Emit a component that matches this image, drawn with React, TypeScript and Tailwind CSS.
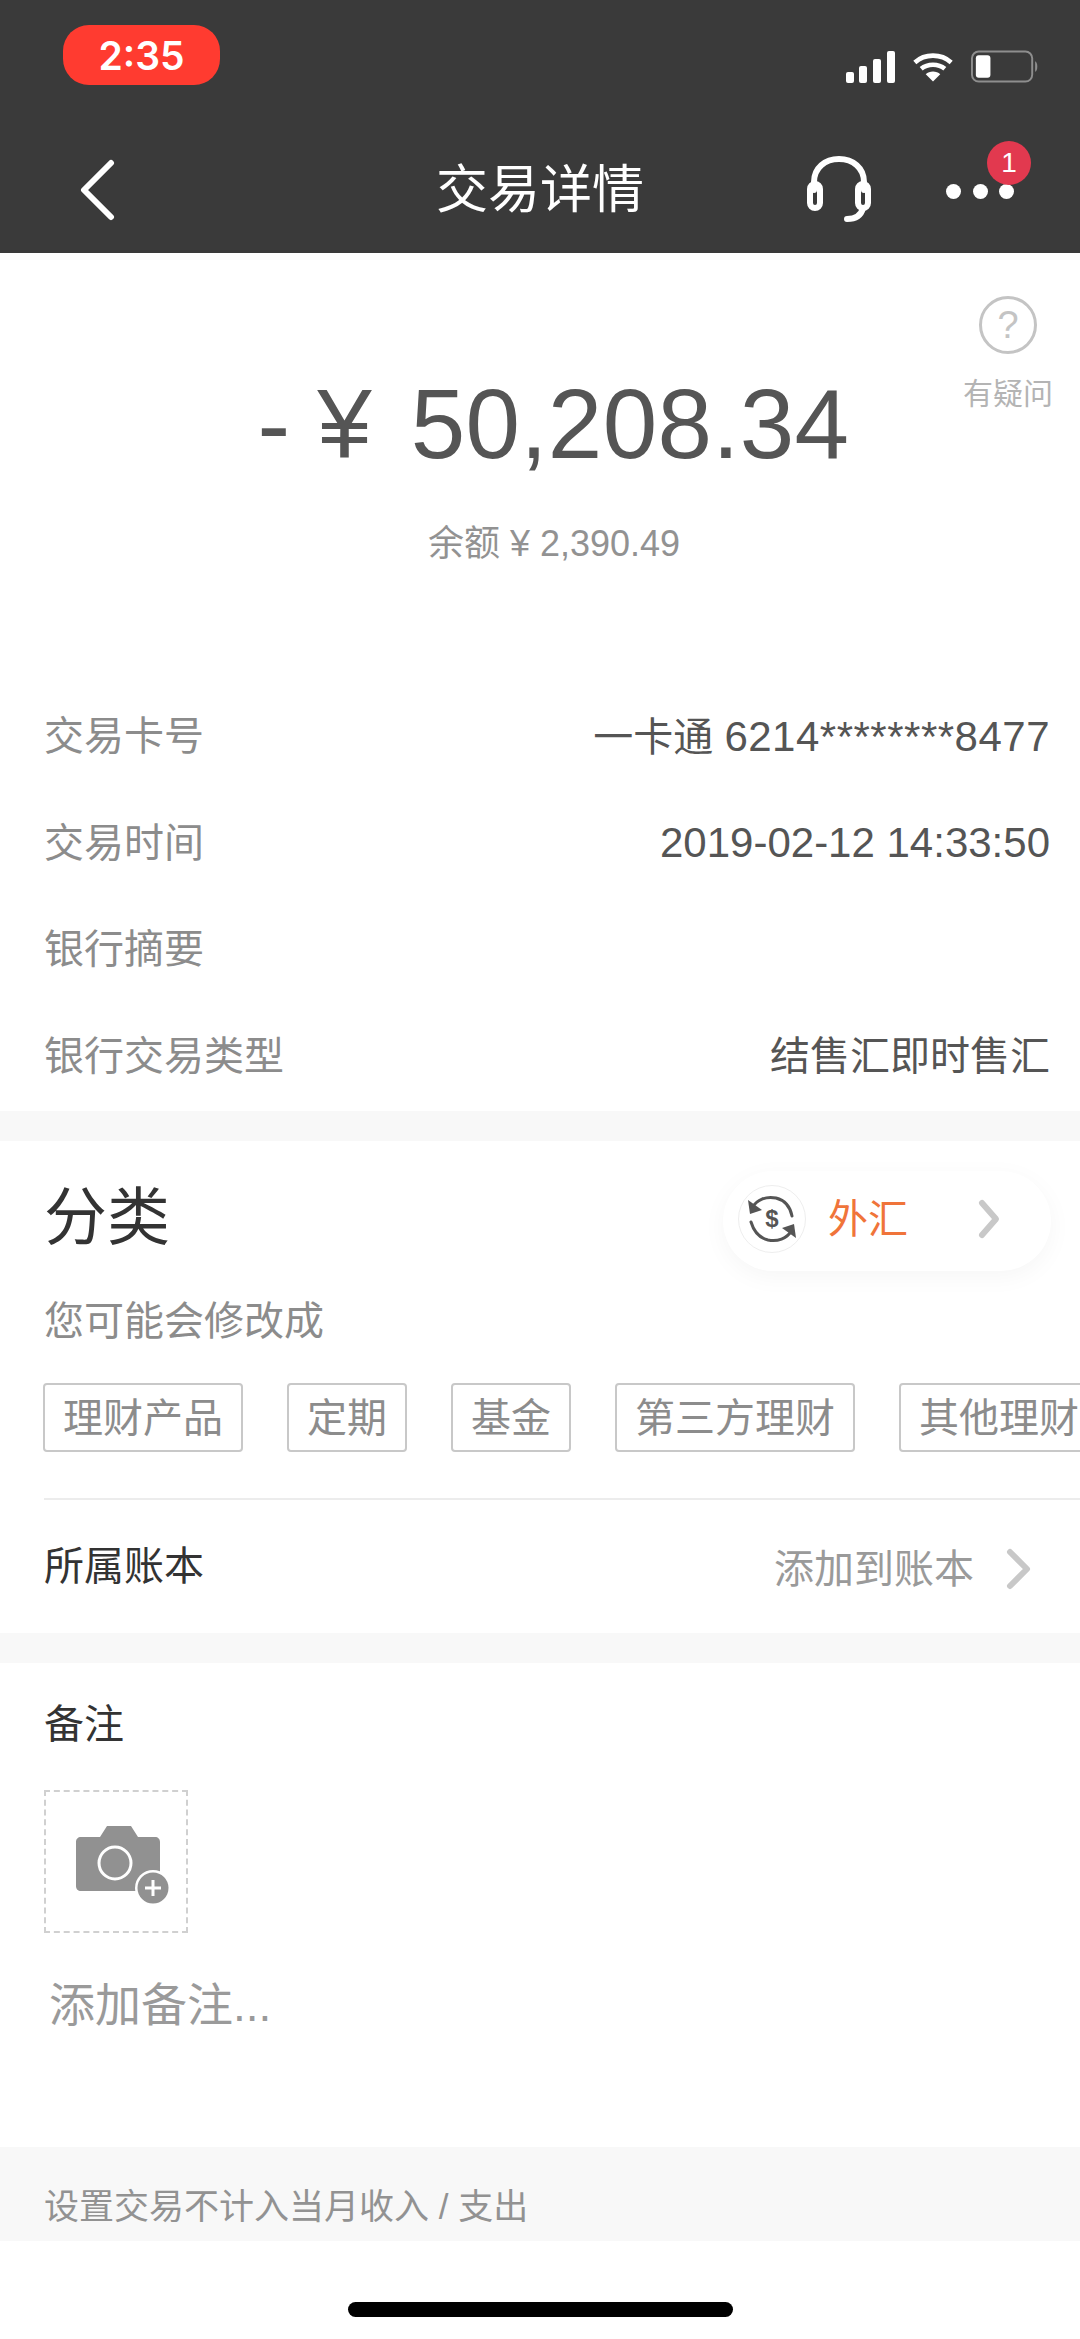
import type { ReactNode } from "react";

const FONT = "font-['Liberation_Sans','Noto_Sans_CJK_SC',sans-serif]";

function StatusIcons() {
  return (
    <div className="flex items-center gap-[18px]">
      <svg width="49" height="32" viewBox="0 0 49 32" fill="#fff">
        <rect x="0" y="21" width="8" height="11" rx="2" />
        <rect x="13" y="15" width="8" height="17" rx="2" />
        <rect x="27" y="8" width="8" height="24" rx="2" />
        <rect x="41" y="0" width="8" height="32" rx="2" />
      </svg>
      <svg width="40" height="32" viewBox="0 0 44 32" fill="none" stroke="#fff" strokeWidth="5">
        <path d="M2 11C13 1 31 1 42 11" />
        <path d="M9 18C16 12 28 12 35 18" />
        <path d="M22 32L14 24C18 20 26 20 30 24Z" fill="#fff" stroke="none" />
      </svg>
      <svg width="68" height="34" viewBox="0 0 70 34">
        <rect x="1" y="1" width="62" height="31" rx="7" fill="none" stroke="#8e8e8e" strokeWidth="2" />
        <rect x="5" y="5" width="15" height="23" rx="3" fill="#fff" />
        <path d="M66 11C69 12 69 21 66 22Z" fill="#8e8e8e" />
      </svg>
    </div>
  );
}

function Header() {
  return (
    <header className="relative h-[253px] shrink-0 bg-[#3a3a3a] text-white">
      <div className="flex h-[118px] items-start justify-between pl-[63px] pr-[41px] pt-[25px]">
        <div className="flex h-[60px] w-[157px] items-center justify-center rounded-[26px] bg-[#ff3b30] pt-[2px] font-['Inter',sans-serif] text-[39px] font-semibold">
          2:35
        </div>
        <div className="pt-[25px]">
          <StatusIcons />
        </div>
      </div>
      <div className="relative flex h-[135px] items-center justify-between pl-[78px] pr-[66px] pt-[8px]">
        <svg width="38" height="62" viewBox="0 0 38 62" fill="none" stroke="#fff" strokeWidth="6" strokeLinecap="round" strokeLinejoin="round">
          <path d="M33 4L6 31L33 58" />
        </svg>
        <div className="absolute left-0 right-0 top-[39px] text-center text-[52px] leading-[66px]">交易详情</div>
        <div className="flex items-center gap-[74px]">
          <svg width="66" height="66" viewBox="0 0 66 66" fill="none" stroke="#fff" strokeWidth="6" strokeLinecap="round" className="-mt-[2px]">
            <path d="M8 34V26C8 12 19 3 33 3C47 3 58 12 58 26V34" />
            <rect x="4" y="28" width="10" height="24" rx="5" />
            <rect x="52" y="28" width="10" height="24" rx="5" />
            <path d="M57 52C55 60 49 63 41 63" />
          </svg>
          <div className="relative mt-[4px] flex w-[68px] items-center justify-between">
            <span className="h-[15px] w-[15px] rounded-full bg-white" />
            <span className="h-[15px] w-[15px] rounded-full bg-white" />
            <span className="h-[15px] w-[15px] rounded-full bg-white" />
            <span className="absolute left-[41px] top-[-43px] flex h-[44px] w-[44px] items-center justify-center rounded-full bg-[#e2394f] text-[28px]">
              1
            </span>
          </div>
        </div>
      </div>
    </header>
  );
}

function Row({ label, value }: { label: string; value?: ReactNode }) {
  return (
    <div className="flex h-[106.5px] items-center justify-between">
      <span className="text-[#8c8c8c]">{label}</span>
      {value && <span className="text-[#555555]">{value}</span>}
    </div>
  );
}

function Chevron({ width, height, color, sw }: { width: number; height: number; color: string; sw: number }) {
  return (
    <svg width={width} height={height} viewBox={`0 0 ${width} ${height}`} fill="none" stroke={color} strokeWidth={sw} strokeLinecap="round" strokeLinejoin="round">
      <path d={`M${sw} ${sw}L${width - sw} ${height / 2}L${sw} ${height - sw}`} />
    </svg>
  );
}

function Chip({ text }: { text: string }) {
  return (
    <span className="flex h-[69px] shrink-0 items-center rounded-[4px] border-2 border-[#c8c8c8] px-[18px] text-[#8c8c8c]">{text}</span>
  );
}

function Amount() {
  return (
    <section className="relative h-[858px] shrink-0 bg-white">
      <div className="absolute right-[27px] top-[43px] flex flex-col items-center text-[30px] leading-[38px] text-[#b4b4b4]">
        <span className="mb-[21px] flex h-[58px] w-[58px] items-center justify-center rounded-full border-[3px] border-[#c4c4c4] text-[38px] leading-none text-[#c4c4c4]">?</span>
        <span>有疑问</span>
      </div>
      <div className="flex h-[226px] items-end justify-center pl-[27px]">
        <div className="flex h-[110px] items-center text-[98px] leading-[110px] text-[#555555]">
          <span>-</span>
          <span className="ml-[27px]">¥</span>
          <span className="ml-[39px] tracking-[0.3px]">50,208.34</span>
        </div>
      </div>
      <div className="mt-[43px] pl-[28px] text-center text-[36px] leading-[44px] text-[#929292]">余额 ¥ 2,390.49</div>
      <div className="mt-[117px] pl-[44px] pr-[30px] text-[40px]">
        <Row label="交易卡号" value={<>一卡通 <span className="text-[42px] tracking-[0.5px]">6214********8477</span></>} />
        <Row label="交易时间" value={<span className="text-[42px]">2019-02-12 14:33:50</span>} />
        <Row label="银行摘要" />
        <Row label="银行交易类型" value="结售汇即时售汇" />
      </div>
    </section>
  );
}

function Category() {
  return (
    <section className="h-[492px] shrink-0 bg-white pl-[44px] text-[40px]">
      <div className="flex h-[150px] items-center justify-between pr-[29px] pt-[3px]">
        <h2 className="mb-[2px] text-[63px] font-normal leading-[80px] text-[#333333]">分类</h2>
        <div className="mt-[7px] flex h-[100px] w-[328px] items-center rounded-[50px] bg-white pb-[4px] pl-[15px] shadow-[0_6px_24px_rgba(0,0,0,0.04)]">
          <span className="flex h-[68px] w-[68px] items-center justify-center rounded-full border border-[#eeeeee]">
            <svg width="50" height="50" viewBox="0 0 50 50" fill="none" stroke="#555555" strokeWidth="3" strokeLinecap="round">
              <path d="M5 14C10 5 20 2 29 4C37 6 43 12 45 22" />
              <path d="M45 36C40 45 30 48 21 46C13 44 7 38 4 28" />
              <path d="M1 6L3 20L15 16Z" fill="#555555" stroke="none" />
              <path d="M49 44L47 30L35 34Z" fill="#555555" stroke="none" />
              <text x="25" y="33" textAnchor="middle" fontSize="24" fontWeight="700" fill="#555555" stroke="none" fontFamily="Liberation Sans, sans-serif">$</text>
            </svg>
          </span>
          <span className="ml-[22px] text-[#f0743a]">外汇</span>
          <span className="ml-[68px]">
            <Chevron width={26} height={44} color="#c8c8c8" sw={6} />
          </span>
        </div>
      </div>
      <div className="mt-[4px] leading-[52px] text-[#8c8c8c]">您可能会修改成</div>
      <div className="-ml-[1px] mt-[36px] flex gap-[44px] overflow-hidden">
        <Chip text="理财产品" />
        <Chip text="定期" />
        <Chip text="基金" />
        <Chip text="第三方理财" />
        <Chip text="其他理财" />
      </div>
      <div className="mt-[46px] flex h-[133px] items-center justify-between border-t-2 border-[#ececec] pr-[47px]">
        <span className="text-[#333333]">所属账本</span>
        <span className="flex items-center gap-[30px] pt-[6px] text-[#9a9a9a]">
          添加到账本
          <Chevron width={29} height={46} color="#c8c8c8" sw={6} />
        </span>
      </div>
    </section>
  );
}

function Notes() {
  return (
    <section className="h-[484px] shrink-0 bg-white pl-[44px]">
      <div className="pt-[35px] text-[40px] leading-[52px] text-[#333333]">备注</div>
      <div className="mt-[40px] flex h-[143px] w-[144px] items-center justify-center border-2 border-dashed border-[#d0d0d0]">
        <svg width="94" height="80" viewBox="0 0 94 80" className="ml-[14px] mt-[8px]">
          <path d="M5 11H24L31 0H55L62 11H79C82 11 84 13 84 16V60C84 63 82 65 79 65H5C2 65 0 63 0 60V16C0 13 2 11 5 11Z" fill="#919191" />
          <circle cx="39" cy="37" r="16" fill="none" stroke="#ffffff" strokeWidth="3" />
          <circle cx="77" cy="62" r="18" fill="#ffffff" />
          <circle cx="77" cy="62" r="15.5" fill="#919191" />
          <path d="M69 62H85M77 54V70" stroke="#ffffff" strokeWidth="3" />
        </svg>
      </div>
      <div className="ml-[5px] mt-[42px] text-[46px] leading-[60px] text-[#9a9a9a]">添加备注...</div>
    </section>
  );
}

export default function App() {
  return (
    <div className={`flex h-[2339px] w-[1080px] flex-col overflow-hidden bg-white ${FONT}`}>
      <Header />
      <Amount />
      <div className="h-[30px] shrink-0 bg-[#f8f8f8]" />
      <Category />
      <div className="h-[30px] shrink-0 bg-[#f8f8f8]" />
      <Notes />
      <div className="flex h-[94px] shrink-0 items-end bg-[#f8f8f8] pb-[12px] pl-[44px] text-[35px] leading-[44px] text-[#929292]">
        设置交易不计入当月收入 / 支出
      </div>
      <div className="flex flex-1 items-start justify-center bg-white pt-[61px]">
        <div className="h-[15px] w-[385px] rounded-full bg-black" />
      </div>
    </div>
  );
}
